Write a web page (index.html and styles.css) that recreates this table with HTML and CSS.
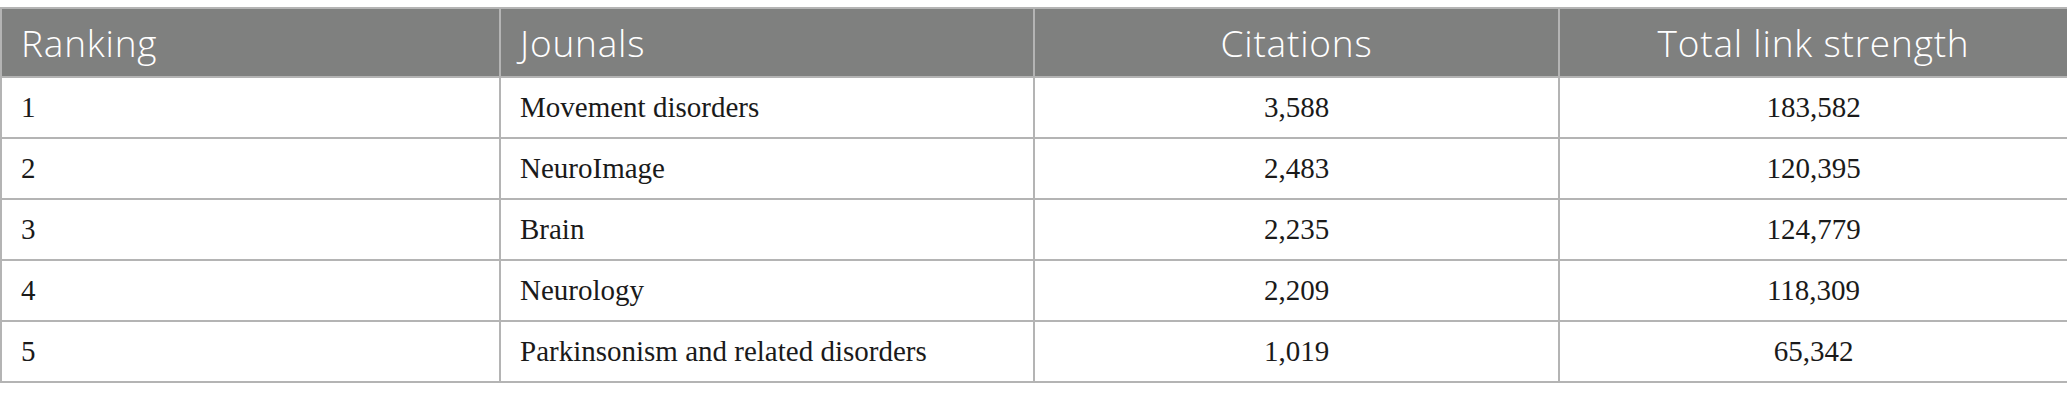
FILE: index.html
```html
<!DOCTYPE html>
<html lang="en">
<head>
<meta charset="utf-8">
<title>Journals</title>
<link rel="stylesheet" href="styles.css">
</head>
<body>
<table class="data">
  <colgroup>
    <col class="c-rank">
    <col class="c-journal">
    <col class="c-cite">
    <col class="c-link">
  </colgroup>
  <thead>
    <tr>
      <th class="left">Ranking</th>
      <th class="left">Jounals</th>
      <th class="center">Citations</th>
      <th class="center">Total link strength</th>
    </tr>
  </thead>
  <tbody>
    <tr><td>1</td><td>Movement disorders</td><td class="center">3,588</td><td class="center">183,582</td></tr>
    <tr><td>2</td><td>NeuroImage</td><td class="center">2,483</td><td class="center">120,395</td></tr>
    <tr><td>3</td><td>Brain</td><td class="center">2,235</td><td class="center">124,779</td></tr>
    <tr><td>4</td><td>Neurology</td><td class="center">2,209</td><td class="center">118,309</td></tr>
    <tr><td>5</td><td>Parkinsonism and related disorders</td><td class="center">1,019</td><td class="center">65,342</td></tr>
  </tbody>
</table>
</body>
</html>
```

FILE: styles.css
```css
html, body {
  margin: 0;
  padding: 0;
  background: #ffffff;
}
body {
  padding-top: 7px;
}
.data {
  width: 2067px;
  border-collapse: collapse;
  table-layout: fixed;
  border: 2px solid #b4b4b4;
}
.c-rank { width: 499px; }
.c-journal { width: 534px; }
.c-cite { width: 525px; }
.c-link { width: 509px; }

.data th {
  background: #7f807f;
  color: #ffffff;
  font-family: "Open Sans", "Noto Sans", sans-serif;
  font-weight: 300;
  font-size: 37px;
  letter-spacing: 0.8px;
  height: 67px;
  padding: 0 19px;
  border: 2px solid #b4b4b4;
  vertical-align: middle;
}
.data td {
  color: #1a1a1a;
  font-family: "Liberation Serif", "Times New Roman", serif;
  font-size: 29px;
  height: 59px;
  padding: 0 19px;
  border: 2px solid #b4b4b4;
  vertical-align: middle;
}
.left { text-align: left; }
.center { text-align: center; }
```
